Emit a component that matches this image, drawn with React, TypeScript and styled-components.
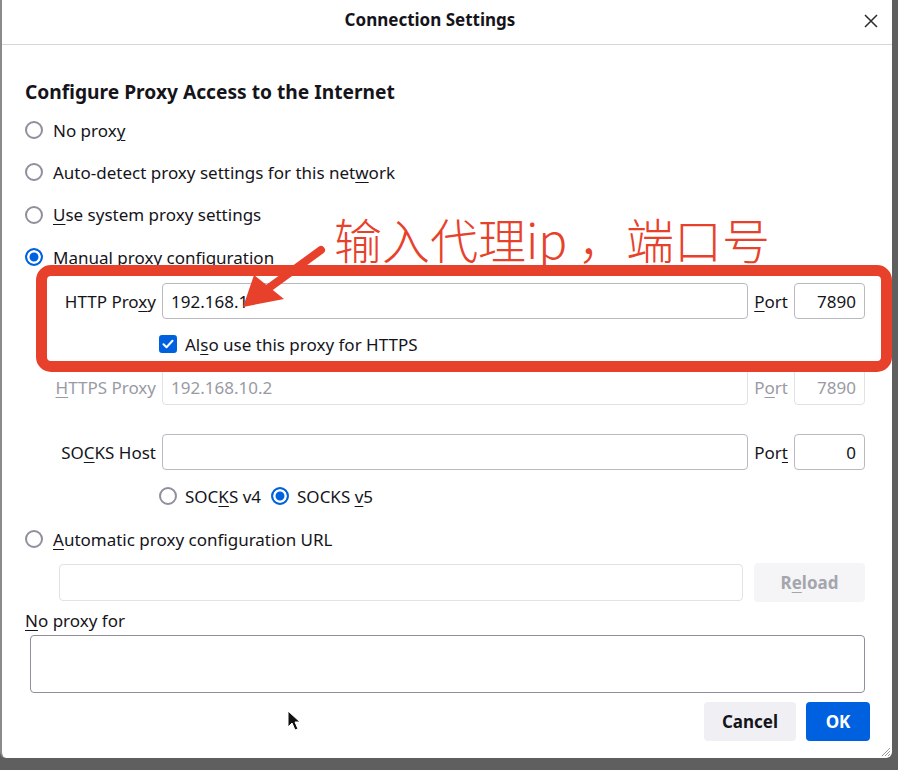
import React from "react";
import styled, { createGlobalStyle, css } from "styled-components";

const Global = createGlobalStyle`
  html, body { margin: 0; padding: 0; background: #5f5f5f; }
  body { font-family: "Noto Sans", "Liberation Sans", sans-serif; color: #15141a; }
  * { box-sizing: border-box; }
`;

const Page = styled.div`
  position: relative;
  width: 898px;
  height: 770px;
  overflow: hidden;
  background: #5f5f5f;
`;

const Dialog = styled.div`
  width: 892px;
  height: 758px;
  background: #fff;
  border-left: 2px solid #8a8a8a;
  border-radius: 0 0 6px 6px;
  display: flex;
  flex-direction: column;
`;

const Header = styled.div`
  height: 45px;
  flex: none;
  display: flex;
  align-items: center;
  justify-content: center;
  position: relative;
  border-bottom: 1px solid #d6d6d6;
`;

const Title = styled.div`
  font-size: 17px;
  font-weight: 700;
  margin-top: -5px;
  margin-right: 34px;
`;

const Close = styled.div`
  position: absolute;
  right: 13px;
  top: 12px;
  width: 16px;
  height: 16px;
`;

const Body = styled.div`
  flex: 1;
  padding: 35px 25px 0 23px;
  display: flex;
  flex-direction: column;
  font-size: 17px;
`;

const Heading = styled.div`
  font-size: 19.2px;
  font-weight: 700;
  line-height: 24px;
  margin-bottom: 5px;
`;

const OptionRow = styled.div<{ $h?: number; $mt?: number }>`
  display: flex;
  align-items: center;
  height: ${(p) => p.$h ?? 42}px;
  margin-top: ${(p) => p.$mt ?? 0}px;
  gap: 10px;
`;

const Radio = styled.span<{ $checked?: boolean }>`
  width: 18px;
  height: 18px;
  flex: none;
  border-radius: 50%;
  border: 2px solid #8f8f9d;
  background: #fff;
  ${(p) =>
    p.$checked &&
    css`
      border-color: #0061e0;
      box-shadow: inset 0 0 0 2.5px #fff;
      background: #0061e0;
    `}
`;

const Label = styled.span<{ $disabled?: boolean }>`
  white-space: nowrap;
  color: ${(p) => (p.$disabled ? "#9a9aa4" : "#15141a")};
  u { text-decoration-thickness: 1px; text-underline-offset: 3px; }
`;

const ProxyRow = styled.div<{ $mt?: number }>`
  display: flex;
  align-items: center;
  gap: 6px;
  margin-top: ${(p) => p.$mt ?? 0}px;
  padding-right: 2px;
`;

const RowLabel = styled(Label)`
  width: 131px;
  text-align: right;
  flex: none;
`;

const Input = styled.div<{ $disabled?: boolean; $h?: number; $align?: string }>`
  height: ${(p) => p.$h ?? 36}px;
  flex: 1;
  border: 1px solid ${(p) => (p.$disabled ? "#e1e1e6" : "#b9b9c0")};
  border-radius: 4px;
  display: flex;
  align-items: center;
  justify-content: ${(p) => p.$align ?? "flex-start"};
  padding: 0 8px;
  color: ${(p) => (p.$disabled ? "#9a9aa4" : "#15141a")};
  background: #fff;
`;

const PortInput = styled(Input)`
  flex: none;
  width: 71px;
`;

const CheckRow = styled.div`
  display: flex;
  align-items: center;
  gap: 8px;
  height: 36px;
  margin-top: 7px;
  padding-left: 134px;
`;

const Check = styled.span`
  width: 18px;
  height: 18px;
  border-radius: 3px;
  background: #0061e0;
  display: flex;
  align-items: center;
  justify-content: center;
`;

const VersionRow = styled.div`
  display: flex;
  align-items: center;
  height: 36px;
  margin-top: 8px;
  padding-left: 134px;
  gap: 8px;
`;

const VersionGroup = styled.span`
  display: flex;
  align-items: center;
  gap: 8px;
  & + & { margin-left: 2px; }
`;

const UrlRow = styled.div`
  display: flex;
  align-items: center;
  gap: 11px;
  padding-left: 34px;
  padding-right: 2px;
  margin-top: 3px;
`;

const Button = styled.div<{ $primary?: boolean; $disabled?: boolean; $w: number }>`
  width: ${(p) => p.$w}px;
  height: 39px;
  flex: none;
  border-radius: 4px;
  display: flex;
  align-items: center;
  justify-content: center;
  font-weight: 700;
  font-size: 17px;
  background: ${(p) => (p.$primary ? "#0061e0" : p.$disabled ? "#f5f5f7" : "#f0f0f4")};
  color: ${(p) => (p.$primary ? "#fff" : p.$disabled ? "#a5a5ad" : "#15141a")};
  u { text-decoration-thickness: 1px; text-underline-offset: 3px; }
`;

const NoProxyLabel = styled.div`
  height: 22px;
  display: flex;
  align-items: center;
  margin-top: 7px;
  u { text-decoration-thickness: 1px; text-underline-offset: 3px; }
`;

const TextArea = styled.div`
  height: 58px;
  margin: 4px 2px 0 5px;
  border: 1px solid #8f8f9d;
  border-radius: 4px;
`;

const Footer = styled.div`
  display: flex;
  justify-content: flex-end;
  gap: 10px;
  margin-top: 9px;
  margin-right: -3px;
`;

const Annotation = styled.div`
  position: absolute;
  left: 36px;
  top: 265px;
  width: 856px;
  height: 107px;
  border: 11px solid #e8412b;
  border-radius: 15px;
  pointer-events: none;
`;

const Callout = styled.div`
  position: absolute;
  left: 334px;
  top: 208px;
  font-family: "Noto Sans CJK SC", sans-serif;
  font-weight: 300;
  font-size: 48px;
  line-height: 60px;
  color: #e8412b;
  white-space: nowrap;
`;

const Overlay = styled.svg`
  position: absolute;
  left: 0;
  top: 0;
  pointer-events: none;
`;

const Grip = styled.svg`
  position: absolute;
  right: 7px;
  bottom: 13px;
`;

export default function App() {
  return (
    <Page>
      <Global />
      <Dialog>
        <Header>
          <Title>Connection Settings</Title>
          <Close>
            <svg width="16" height="16" viewBox="0 0 16 16">
              <path d="M2 2L14 14M14 2L2 14" stroke="#2b2b2b" strokeWidth="1.5" />
            </svg>
          </Close>
        </Header>
        <Body>
          <Heading>Configure Proxy Access to the Internet</Heading>
          <OptionRow>
            <Radio />
            <Label>
              No prox<u>y</u>
            </Label>
          </OptionRow>
          <OptionRow>
            <Radio />
            <Label>
              Auto-detect proxy settings for this net<u>w</u>ork
            </Label>
          </OptionRow>
          <OptionRow $h={43}>
            <Radio />
            <Label>
              <u>U</u>se system proxy settings
            </Label>
          </OptionRow>
          <OptionRow>
            <Radio $checked />
            <Label>Manual proxy configuration</Label>
          </OptionRow>

          <ProxyRow $mt={5}>
            <RowLabel>
              HTTP Pro<u>x</u>y
            </RowLabel>
            <Input>192.168.1</Input>
            <Label>
              <u>P</u>ort
            </Label>
            <PortInput $align="flex-end">7890</PortInput>
          </ProxyRow>
          <CheckRow>
            <Check>
              <svg width="12" height="10" viewBox="0 0 12 10">
                <path d="M1.5 5.2L4.5 8.2L10.5 1.8" fill="none" stroke="#fff" strokeWidth="2" strokeLinecap="round" strokeLinejoin="round" />
              </svg>
            </Check>
            <Label>
              Al<u>s</u>o use this proxy for HTTPS
            </Label>
          </CheckRow>
          <ProxyRow $mt={7}>
            <RowLabel $disabled>
              <u>H</u>TTPS Proxy
            </RowLabel>
            <Input $disabled>192.168.10.2</Input>
            <Label $disabled>
              P<u>o</u>rt
            </Label>
            <PortInput $disabled $align="flex-end">7890</PortInput>
          </ProxyRow>
          <ProxyRow $mt={29}>
            <RowLabel>
              SO<u>C</u>KS Host
            </RowLabel>
            <Input />
            <Label>
              Por<u>t</u>
            </Label>
            <PortInput $align="flex-end">0</PortInput>
          </ProxyRow>
          <VersionRow>
            <VersionGroup>
              <Radio />
              <Label>
                SOC<u>K</u>S v4
              </Label>
            </VersionGroup>
            <VersionGroup>
              <Radio $checked />
              <Label>
                SOCKS <u>v</u>5
              </Label>
            </VersionGroup>
          </VersionRow>
          <OptionRow $mt={4}>
            <Radio />
            <Label>
              <u>A</u>utomatic proxy configuration URL
            </Label>
          </OptionRow>
          <UrlRow>
            <Input $disabled $h={37} />
            <Button $disabled $w={111}>
              <span>
                R<u>e</u>load
              </span>
            </Button>
          </UrlRow>
          <NoProxyLabel>
            <span>
              <u>N</u>o proxy for
            </span>
          </NoProxyLabel>
          <TextArea />
          <Footer>
            <Button $w={92}>Cancel</Button>
            <Button $primary $w={64}>OK</Button>
          </Footer>
        </Body>
      </Dialog>

      <Annotation />
      <Callout>输入代理ip ，端口号</Callout>
      <Overlay width="898" height="770" viewBox="0 0 898 770">
        <path d="M321 250L266 290" stroke="#e8412b" strokeWidth="8" strokeLinecap="round" />
        <polygon points="243,307 254,275 284,299" fill="#e8412b" />
        <path d="M288 711L288 727L292 723L295 730L298 729L295 722L300 722Z" fill="#111" stroke="#fff" strokeWidth="1" />
      </Overlay>
      <Grip width="12" height="12" viewBox="0 0 12 12">
        <path d="M11 3L3 11M11 6L6 11M11 9L9 11" stroke="#9a9a9a" strokeWidth="1" />
      </Grip>
    </Page>
  );
}
